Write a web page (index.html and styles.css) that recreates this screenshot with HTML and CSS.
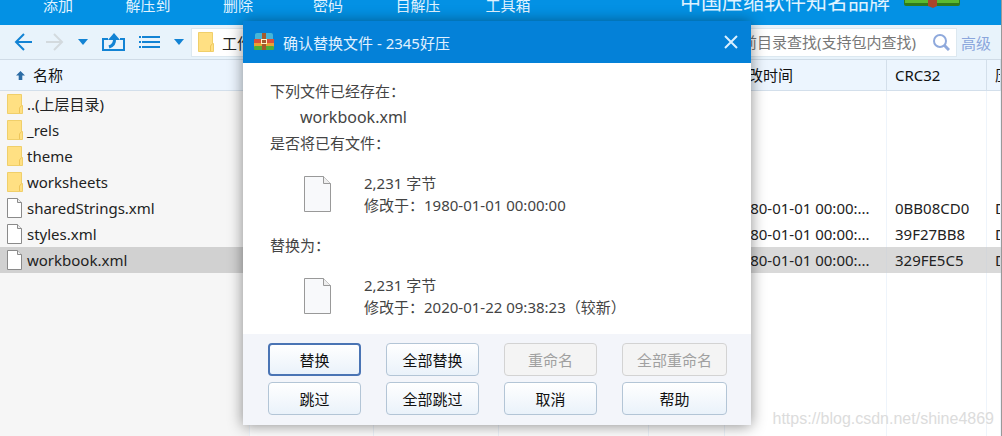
FILE: index.html
```html
<!DOCTYPE html>
<html lang="zh-CN">
<head>
    <meta charset="UTF-8">
    <meta name="viewport" content="width=device-width, initial-scale=1.0">
    <title>2345好压</title>
    <link rel="stylesheet" href="styles.css">
</head>
<body>
    <svg class="defs" width="0" height="0" aria-hidden="true">
        <symbol id="folder" viewBox="0 0 16 20">
            <path d="M.5.5h14v11h1v8H.5z" fill="#ffe083" stroke="#f0cf6a"/>
            <path d="M12.500 19v-5l2-2.500" fill="none" stroke="#eec55a"/>
        </symbol>
        <symbol id="file" viewBox="0 0 16 20">
            <path d="M.5.5h10l4 4v15H.5z" fill="#fff" stroke="#8a8a8a"/>
            <path d="M10.500.5v4h4" fill="#eee" stroke="#8a8a8a"/>
        </symbol>
        <symbol id="page" viewBox="0 0 27 36">
            <path d="M.5.5h19l7 7v28H.5z" fill="#f8f9fb" stroke="#999"/>
            <path d="M19.500.5v7h7" fill="#eee" stroke="#999"/>
        </symbol>
        <symbol id="caret" viewBox="0 0 10 6">
            <path d="M0 0h10L5 6z" fill="#1283d4"/>
        </symbol>
    </svg>

    <div class="app">
        <header class="header">
            <nav class="menu">
                <button>添加</button>
                <button>解压到</button>
                <button>删除</button>
                <button>密码</button>
                <button>自解压</button>
                <button>工具箱</button>
            </nav>
            <div class="slogan">中国压缩软件知名品牌</div>
            <svg class="header-logo" width="56" height="8" viewBox="0 0 56 8">
                <path d="M0 0h56v4q0 2-2 2H2q-2 0-2-2z" fill="#2f7a1c"/>
                <path d="M1 0h54v3H1z" fill="#5cba30"/>
                <path d="M24 0h9v6l-4 2-5-2z" fill="#a9452c"/>
            </svg>
        </header>

        <div class="toolbar">
            <div class="tools">
                <button class="tool" aria-label="后退">
                    <svg width="18" height="18" viewBox="0 0 18 18" fill="none" stroke="#1283d4" stroke-width="2"><path d="M18 9H2M10 1L2 9l8 8"/></svg>
                </button>
                <button class="tool" aria-label="前进">
                    <svg width="18" height="18" viewBox="0 0 18 18" fill="none" stroke="#d3dade" stroke-width="2"><path d="M0 9h16M8 1l8 8-8 8"/></svg>
                </button>
                <button class="tool" aria-label="历史记录">
                    <svg width="10" height="6"><use href="#caret"/></svg>
                </button>
                <button class="tool" aria-label="向上">
                    <svg width="23" height="18" viewBox="0 0 23 18" fill="none" stroke="#1283d4" stroke-width="2"><path d="M6 6H1v11h21V6h-4"/><path d="M7 14Q13 12 12.500 6" stroke-width="3"/><path d="M6 7l6-7 6 7z" fill="#1283d4" stroke="none"/></svg>
                </button>
                <button class="tool" aria-label="查看">
                    <svg width="21" height="12" viewBox="0 0 21 12" fill="#1283d4"><path d="M0 0h2v2H0zM3 0h18v2H3zM0 5h2v2H0zM3 5h18v2H3zM0 10h2v2H0zM3 10h18v2H3z"/></svg>
                </button>
                <button class="tool" aria-label="查看方式">
                    <svg width="10" height="6"><use href="#caret"/></svg>
                </button>
            </div>
            <div class="address">
                <svg class="icon"><use href="#folder"/></svg>
                <span>工作簿</span>
            </div>
            <div class="search">
                <input type="text" aria-label="查找" placeholder="在当前目录查找(支持包内查找)">
                <button class="search-button" aria-label="搜索">
                    <svg width="17" height="17" viewBox="0 0 17 17" fill="none" stroke="#8fa9dc" stroke-width="2"><circle cx="7" cy="7" r="6"/><path d="M11 11l5 5" stroke-width="3"/></svg>
                </button>
            </div>
            <a class="advanced" href="#">高级</a>
        </div>

        <div class="file-list">
            <table class="files">
                <colgroup>
                    <col class="col-name">
                    <col class="col-size">
                    <col class="col-packed">
                    <col class="col-type">
                    <col class="col-attr">
                    <col class="col-time">
                    <col class="col-crc">
                    <col>
                </colgroup>
                <thead>
                    <tr>
                        <th><div class="sort"><svg width="9" height="9" viewBox="0 0 10 10"><path d="M5 0l5 5H7v5H3V5H0z" fill="#2c6ca5"/></svg>名称</div></th>
                        <th></th>
                        <th></th>
                        <th></th>
                        <th></th>
                        <th>修改时间</th>
                        <th>CRC32</th>
                        <th>压</th>
                    </tr>
                </thead>
                <tbody>
                    <tr>
                        <td><div class="name"><svg class="icon"><use href="#folder"/></svg>..(上层目录)</div></td>
                        <td></td><td></td><td></td><td></td><td></td><td></td><td></td>
                    </tr>
                    <tr>
                        <td><div class="name"><svg class="icon"><use href="#folder"/></svg>_rels</div></td>
                        <td></td><td></td><td></td><td></td><td></td><td></td><td></td>
                    </tr>
                    <tr>
                        <td><div class="name"><svg class="icon"><use href="#folder"/></svg>theme</div></td>
                        <td></td><td></td><td></td><td></td><td></td><td></td><td></td>
                    </tr>
                    <tr>
                        <td><div class="name"><svg class="icon"><use href="#folder"/></svg>worksheets</div></td>
                        <td></td><td></td><td></td><td></td><td></td><td></td><td></td>
                    </tr>
                    <tr>
                        <td><div class="name"><svg class="icon"><use href="#file"/></svg>sharedStrings.xml</div></td>
                        <td></td><td></td><td></td><td></td><td>1980-01-01 00:00:...</td><td>0BB08CD0</td><td>D</td>
                    </tr>
                    <tr>
                        <td><div class="name"><svg class="icon"><use href="#file"/></svg>styles.xml</div></td>
                        <td></td><td></td><td></td><td></td><td>1980-01-01 00:00:...</td><td>39F27BB8</td><td>D</td>
                    </tr>
                    <tr class="selected">
                        <td><div class="name"><svg class="icon"><use href="#file"/></svg>workbook.xml</div></td>
                        <td></td><td></td><td></td><td></td><td>1980-01-01 00:00:...</td><td>329FE5C5</td><td>D</td>
                    </tr>
                    <tr class="filler">
                        <td></td><td></td><td></td><td></td><td></td><td></td><td></td><td></td>
                    </tr>
                </tbody>
            </table>
        </div>
    </div>

    <div class="watermark">https://blog.csdn.net/shine4869</div>

    <div class="dialog" role="dialog" aria-labelledby="dialogTitle">
        <div class="dialog-title">
            <svg width="20" height="18" viewBox="0 0 20 18">
                <rect x="1" y="0" width="18" height="8" rx="2" fill="#45b5d8"/>
                <rect x="0" y="6" width="20" height="4" fill="#d9503a"/>
                <rect x="0" y="10" width="20" height="4" fill="#e9a035"/>
                <rect x="0" y="13" width="20" height="4" rx="1" fill="#4fae3a"/>
                <path d="M8 0h4v17H8z" fill="#a35a2d"/>
                <rect x="7.500" y="6.500" width="5" height="4" fill="#a35a2d" stroke="#fff3c4"/>
            </svg>
            <h1 id="dialogTitle">确认替换文件 - 2345好压</h1>
            <button class="close" aria-label="关闭">
                <svg width="14" height="14" viewBox="0 0 14 14" fill="none" stroke="#d9efff" stroke-width="2"><path d="M1 1l12 12M13 1L1 13"/></svg>
            </button>
        </div>
        <div class="dialog-body">
            <p>下列文件已经存在：</p>
            <p class="filename">workbook.xml</p>
            <p>是否将已有文件：</p>
            <div class="file-info">
                <svg width="27" height="36"><use href="#page"/></svg>
                <div>
                    <div>2,231 字节</div>
                    <div>修改于：1980-01-01 00:00:00</div>
                </div>
            </div>
            <p>替换为：</p>
            <div class="file-info">
                <svg width="27" height="36"><use href="#page"/></svg>
                <div>
                    <div>2,231 字节</div>
                    <div>修改于：2020-01-22 09:38:23（较新）</div>
                </div>
            </div>
        </div>
        <div class="dialog-buttons">
            <button class="btn primary">替换</button>
            <button class="btn">全部替换</button>
            <button class="btn" disabled>重命名</button>
            <button class="btn" disabled>全部重命名</button>
            <button class="btn">跳过</button>
            <button class="btn">全部跳过</button>
            <button class="btn">取消</button>
            <button class="btn">帮助</button>
        </div>
    </div>
</body>
</html>
```
FILE: styles.css
```css
* {
    margin: 0;
    padding: 0;
    box-sizing: border-box;
}

body {
    font-family: "Noto Sans", "Noto Sans CJK SC", sans-serif;
    font-size: 15px;
    color: #222;
    background: #fff;
    min-height: 100vh;
    position: relative;
}

button, input {
    font: inherit;
    color: inherit;
}

svg {
    flex-shrink: 0;
}

.defs {
    position: absolute;
}

.icon {
    width: 16px;
    height: 20px;
}

.app {
    height: 100vh;
    display: flex;
    flex-direction: column;
    border-right: 1px solid #999;
}

/* Header */
.header {
    display: flex;
    align-items: flex-start;
    height: 25px;
    background: #0391e4;
    color: #e0f3ff;
    overflow: hidden;
}

.menu {
    display: flex;
    flex: 1;
    padding-left: 13px;
}

.menu button {
    width: 90px;
    line-height: 10px;
    border: none;
    background: none;
    white-space: nowrap;
}

.slogan {
    font-size: 21px;
    line-height: 2px;
    margin-right: 14px;
    white-space: nowrap;
}

.header-logo {
    margin-right: 41px;
}

/* Toolbar */
.toolbar {
    display: flex;
    align-items: center;
    height: 35px;
    background: #e8f3fb;
    border-bottom: 1px solid #cfdbe6;
}

.tools {
    display: flex;
    align-items: center;
    gap: 14px;
    padding: 0 7px 0 14px;
}

.tool {
    border: none;
    background: none;
    display: flex;
}

.address {
    flex: 1;
    display: flex;
    align-items: center;
    gap: 8px;
    height: 29px;
    padding-left: 6px;
    background: #fff;
    border: 1px solid #dce8f0;
    white-space: nowrap;
}

.search {
    display: flex;
    align-items: center;
    width: 246px;
    height: 29px;
    padding-right: 6px;
    background: #fff;
    border: 1px solid #dce8f0;
}

.search input {
    flex: 1;
    min-width: 0;
    border: none;
    background: none;
}

.search input::placeholder {
    color: #777;
}

.search-button {
    border: none;
    background: none;
    display: flex;
}

.advanced {
    color: #8ba6dc;
    text-decoration: none;
    padding: 0 10px 0 4px;
    white-space: nowrap;
}

/* File list */
.file-list {
    flex: 1;
    overflow: hidden;
}

.files {
    width: 100%;
    height: 100%;
    table-layout: fixed;
    border-collapse: separate;
    border-spacing: 0;
    line-height: 20px;
}

.col-name { width: 250px; }
.col-size { width: 124px; }
.col-packed { width: 125px; }
.col-type { width: 150px; }
.col-attr { width: 76px; }
.col-time { width: 162px; }
.col-crc { width: 100px; }

.files th,
.files td {
    padding-left: 8px;
    text-align: left;
    font-weight: normal;
    white-space: nowrap;
    overflow: hidden;
    border-right: 1px solid #eef4fb;
}

.files th:first-child,
.files td:first-child {
    padding-left: 7px;
}

.files th {
    height: 31px;
    color: #111;
    background: #ecf5fe;
    border-right-color: #d3dfeb;
    border-bottom: 1px solid #d3dfeb;
}

.files td {
    height: 26px;
}

.files td:first-child {
    background: #f6f6f6;
}

.files .selected td {
    background: #d9d9d9;
    border-right-color: #d3d6da;
}

.files .selected td:first-child {
    background: #d1d1d1;
}

.files .filler td {
    height: auto;
}

.name {
    display: flex;
    align-items: center;
    gap: 4px;
}

.sort {
    display: flex;
    align-items: center;
    gap: 8px;
    padding-left: 9px;
}

.watermark {
    position: absolute;
    right: 8px;
    bottom: 8px;
    font-family: "Liberation Sans", sans-serif;
    font-size: 16px;
    color: #dcdcdc;
}

/* Dialog */
.dialog {
    position: absolute;
    top: 21px;
    left: 243px;
    width: 508px;
    background: #fff;
    box-shadow: 0 1px 14px rgba(0, 0, 0, 0.45);
}

.dialog-title {
    display: flex;
    align-items: center;
    gap: 9px;
    height: 42px;
    padding: 0 13px 0 11px;
    background: #0481d8;
    color: #e0f1ff;
}

.dialog-title h1 {
    flex: 1;
    font-size: 15px;
    font-weight: normal;
}

.close {
    border: none;
    background: none;
    display: flex;
}

.dialog-body {
    padding: 15px 27px 16px;
    color: #444;
}

.dialog-body p {
    line-height: 26px;
}

.dialog-body .filename {
    padding-left: 30px;
    font-size: 16px;
}

.file-info {
    display: flex;
    align-items: center;
    gap: 33px;
    margin: 16px 0;
    padding-left: 34px;
    line-height: 22px;
}

.file-info:last-child {
    margin-bottom: 0;
}

.dialog-buttons {
    display: grid;
    grid-template-columns: 93px 93px 93px 1fr;
    gap: 6px 25px;
    padding: 9px 24px 10px 25px;
    background: #f3f5fa;
}

.btn {
    height: 33px;
    line-height: 20px;
    color: #111;
    background: linear-gradient(#fff, #eaf2fa);
    border: 1px solid #b3c5d6;
    border-radius: 4px;
}

.btn.primary {
    border: 2px solid #4a74b4;
}

.btn:disabled {
    color: #a0a0a0;
    background: #f4f4f4;
    border-color: #d3d3d3;
}
```
